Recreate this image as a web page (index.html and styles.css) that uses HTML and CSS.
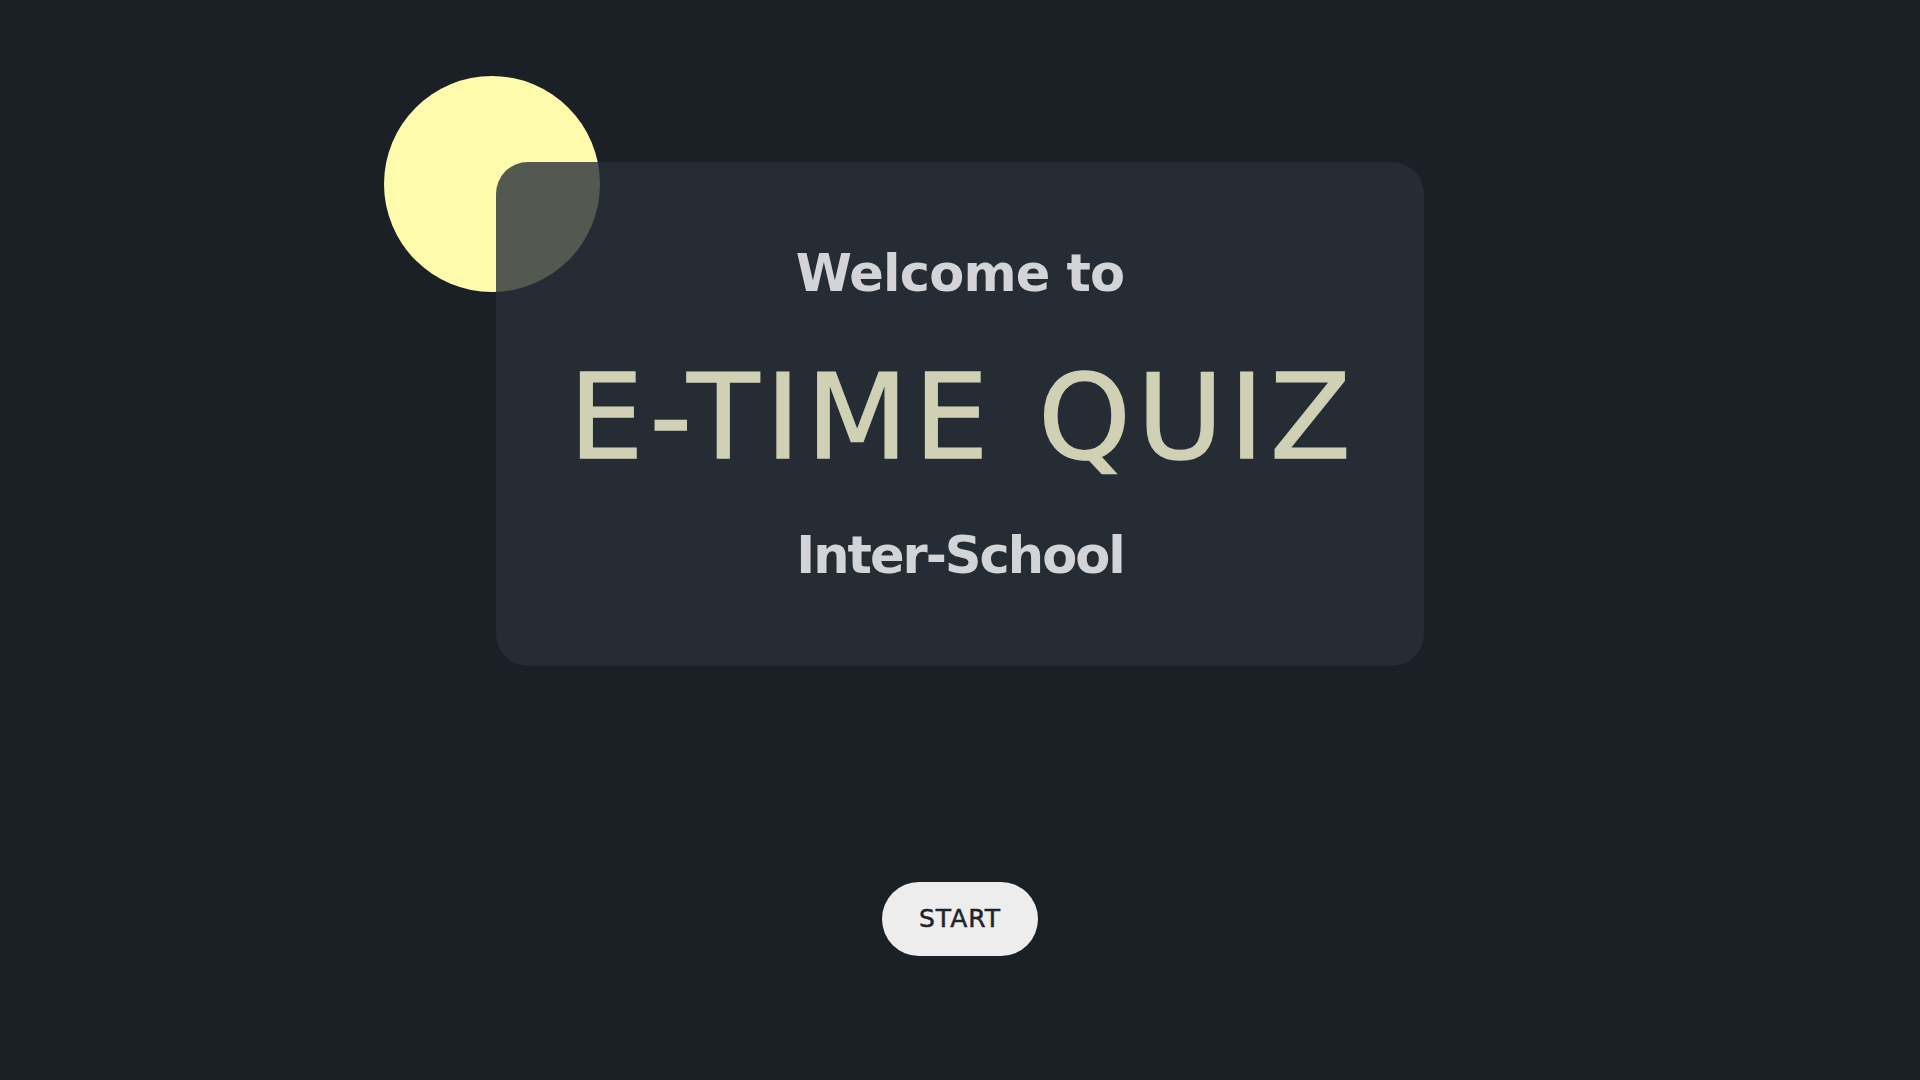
FILE: index.html
```html
<!DOCTYPE html>
<html lang="en">
<head>
<meta charset="utf-8">
<title>E-TIME QUIZ</title>
<link rel="stylesheet" href="styles.css">
</head>
<body>
<main class="page">
  <section class="hero">
    <div class="sun"></div>
    <div class="card">
      <h2 class="lead">Welcome to</h2>
      <h1 class="title">E-TIME QUIZ</h1>
      <h2 class="sub">Inter-School</h2>
    </div>
  </section>
  <button class="start" type="button">START</button>
</main>
</body>
</html>
```
FILE: styles.css
```css
html, body {
  margin: 0;
  padding: 0;
  background: #1b1f26;
}
body {
  font-family: "DejaVu Sans", "Open Sans", sans-serif;
  min-height: 1080px;
}
.page {
  display: flex;
  flex-direction: column;
  align-items: center;
}
.hero {
  position: relative;
  isolation: isolate;
  margin-top: 162px;
}
.sun {
  position: absolute;
  left: -112px;
  top: -86px;
  width: 216px;
  height: 216px;
  border-radius: 50%;
  background: #fffbad;
  z-index: -1;
}
.card {
  width: 928px;
  box-sizing: border-box;
  padding: 82px 0 80px;
  border-radius: 32px;
  background: rgba(40, 48, 56, 0.8);
  display: flex;
  flex-direction: column;
  align-items: center;
  text-align: center;
}
.lead, .sub {
  margin: 0;
  font-size: 51px;
  line-height: 60px;
  font-weight: 700;
  color: #d2d4d7;
}
.lead {
  letter-spacing: -0.8px;
}
.sub {
  margin-top: 44px;
  letter-spacing: -2px;
}
.title {
  margin: 48px 0 0;
  padding-left: 6px;
  font-size: 118px;
  line-height: 130px;
  font-weight: 400;
  color: #cfd0b4;
  -webkit-text-stroke: 1.4px #cfd0b4;
  letter-spacing: 6px;
}
.start {
  margin-top: 216px;
  width: 156px;
  height: 74px;
  padding: 0;
  border: none;
  border-radius: 37px;
  background: #ededed;
  color: #1f232a;
  font-family: "DejaVu Sans", "Open Sans", sans-serif;
  font-size: 25px;
  line-height: 30px;
  letter-spacing: 1px;
  -webkit-text-stroke: 0.5px #1f232a;
  cursor: pointer;
}
```
